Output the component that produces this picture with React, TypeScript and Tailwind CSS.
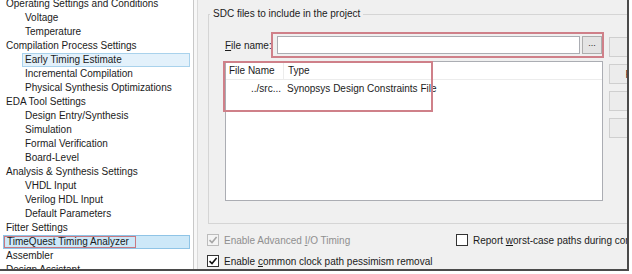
import React from 'react';

// Settings tree: [label, indent level, selection style]
type TreeItem = { label: string; level: 0 | 1; sel?: 'soft' | 'strong'; mark?: boolean };

const treeItems: TreeItem[] = [
  { label: 'Operating Settings and Conditions', level: 0 },
  { label: 'Voltage', level: 1 },
  { label: 'Temperature', level: 1 },
  { label: 'Compilation Process Settings', level: 0 },
  { label: 'Early Timing Estimate', level: 1, sel: 'soft' },
  { label: 'Incremental Compilation', level: 1 },
  { label: 'Physical Synthesis Optimizations', level: 1 },
  { label: 'EDA Tool Settings', level: 0 },
  { label: 'Design Entry/Synthesis', level: 1 },
  { label: 'Simulation', level: 1 },
  { label: 'Formal Verification', level: 1 },
  { label: 'Board-Level', level: 1 },
  { label: 'Analysis & Synthesis Settings', level: 0 },
  { label: 'VHDL Input', level: 1 },
  { label: 'Verilog HDL Input', level: 1 },
  { label: 'Default Parameters', level: 1 },
  { label: 'Fitter Settings', level: 0 },
  { label: 'TimeQuest Timing Analyzer', level: 0, sel: 'strong', mark: true },
  { label: 'Assembler', level: 0 },
  { label: 'Design Assistant', level: 0 },
];

const Check = ({ color }: { color: string }) => (
  <svg width="10" height="10" viewBox="0 0 10 10" fill="none">
    <path d="M1.5 5.2 L4 7.6 L8.6 2" stroke={color} strokeWidth="1.6" />
  </svg>
);

const Checkbox = ({ checked, disabled }: { checked?: boolean; disabled?: boolean }) => (
  <span
    className={`w-[12px] h-[12px] shrink-0 flex items-center justify-center border ${
      disabled ? 'border-[#bcbcbc] bg-[#f4f4f4]' : 'border-[#333333] bg-white'
    }`}
  >
    {checked && <Check color={disabled ? '#a6a6a6' : '#111111'} />}
  </span>
);

const TreeRow = ({ item }: { item: TreeItem }) => {
  const selCls =
    item.sel === 'soft'
      ? 'bg-[#e3f1fb] border-[#a9d2ec]'
      : item.sel === 'strong'
        ? 'bg-[#cde8f8] border-[#8fc4e6]'
        : 'border-transparent';
  return (
    <div
      className={`h-[14px] leading-[12px] border mr-[3px] px-[2px] whitespace-nowrap ${
        item.level === 0 ? 'ml-[3px]' : 'ml-[22px]'
      } ${selCls}`}
    >
      {item.mark ? (
        <span className="inline-block border-[1.5px] border-[#c97881] -ml-[2px] pl-[2px] pr-[6px] leading-[10px]">
          {item.label}
        </span>
      ) : (
        item.label
      )}
    </div>
  );
};

export default function App() {
  return (
    <div
      className="w-[632px] h-[274px] bg-white overflow-hidden text-[10px] text-[#1b1b1b]"
      style={{ fontFamily: '"Liberation Sans", Arial, sans-serif' }}
    >
      <div className="w-[629px] h-[271px] border-r-2 border-b-2 border-[#4a4a4a] overflow-hidden flex">
        {/* Left tree */}
        <div className="w-[194px] shrink-0 bg-white border-r border-[#c8c8c8] overflow-hidden">
          <div className="-mt-[3px]">
            {treeItems.map((item) => (
              <TreeRow key={item.label} item={item} />
            ))}
          </div>
        </div>
        <div className="w-[4px] shrink-0 bg-[#f7f7f7] border-r border-[#dadada]" />

        {/* Right pane */}
        <div className="flex-1 min-w-0 bg-[#f0f0f0] overflow-hidden pl-[10px] pt-[8px]">
          <fieldset className="w-[520px] border border-[#d5d5d5] pl-[16px] pb-[22px]">
            <legend className="ml-[-15px] px-[3px] leading-[12px]">
              SDC files to include in the project
            </legend>
            <div className="flex mt-[12px]">
              <div className="w-[379px] shrink-0">
                <div className="flex items-center">
                  <span className="w-[46px] shrink-0 whitespace-nowrap">
                    <span className="underline">F</span>ile name:
                  </span>
                  <div className="flex border-2 border-[#cf8089] pl-[4px] py-[2px]">
                    <div className="w-[303px] h-[18px] bg-white border border-[#abadb3]" />
                    <div className="w-[20px] h-[18px] ml-[2px] bg-[#e4e4e4] border border-[#adadad] flex items-center justify-center text-[9px] leading-none pb-[3px]">
                      ...
                    </div>
                  </div>
                </div>
                <div className="relative mt-[3px] w-[378px] h-[140px] bg-white border border-[#abadb3]">
                  <div className="flex h-[18px] items-center border-b border-[#ececec]">
                    <span className="w-[58px] pl-[3px] border-r border-[#ececec] h-full flex items-center">
                      File Name
                    </span>
                    <span className="pl-[4px]">Type</span>
                  </div>
                  <div className="flex h-[17px] items-center">
                    <span className="w-[58px] text-right pr-[3px]">../src...</span>
                    <span className="pl-[3px]">Synopsys Design Constraints File</span>
                  </div>
                  <div className="absolute -left-[3px] -top-px w-[210px] h-[51px] border-2 border-[#cf8089]" />
                </div>
              </div>
              <div className="ml-[5px] mt-[5px] flex flex-col gap-[7px]">
                {['Add', 'Remove', 'Up', 'Down'].map((b) => (
                  <div
                    key={b}
                    className="w-[70px] h-[20px] bg-[#ececec] border border-[#cfcfcf] flex items-center justify-center"
                  >
                    {b}
                  </div>
                ))}
              </div>
            </div>
          </fieldset>

          <div className="mt-[10px] flex items-center h-[12px] -ml-px">
            <div className="flex items-center gap-[5px] w-[249px] shrink-0 text-[#8f8f8f]">
              <Checkbox checked disabled />
              <span className="whitespace-nowrap">
                Enable Advanced <span className="underline">I</span>/O Timing
              </span>
            </div>
            <div className="flex items-center gap-[5px] whitespace-nowrap shrink-0">
              <Checkbox />
              <span>
                Report <span className="underline">w</span>orst-case paths during compilation
              </span>
            </div>
          </div>
          <div className="mt-[9px] flex items-center gap-[5px] h-[12px] -ml-px">
            <Checkbox checked />
            <span className="whitespace-nowrap">
              Enable <span className="underline">c</span>ommon clock path pessimism removal
            </span>
          </div>
        </div>
      </div>
    </div>
  );
}
